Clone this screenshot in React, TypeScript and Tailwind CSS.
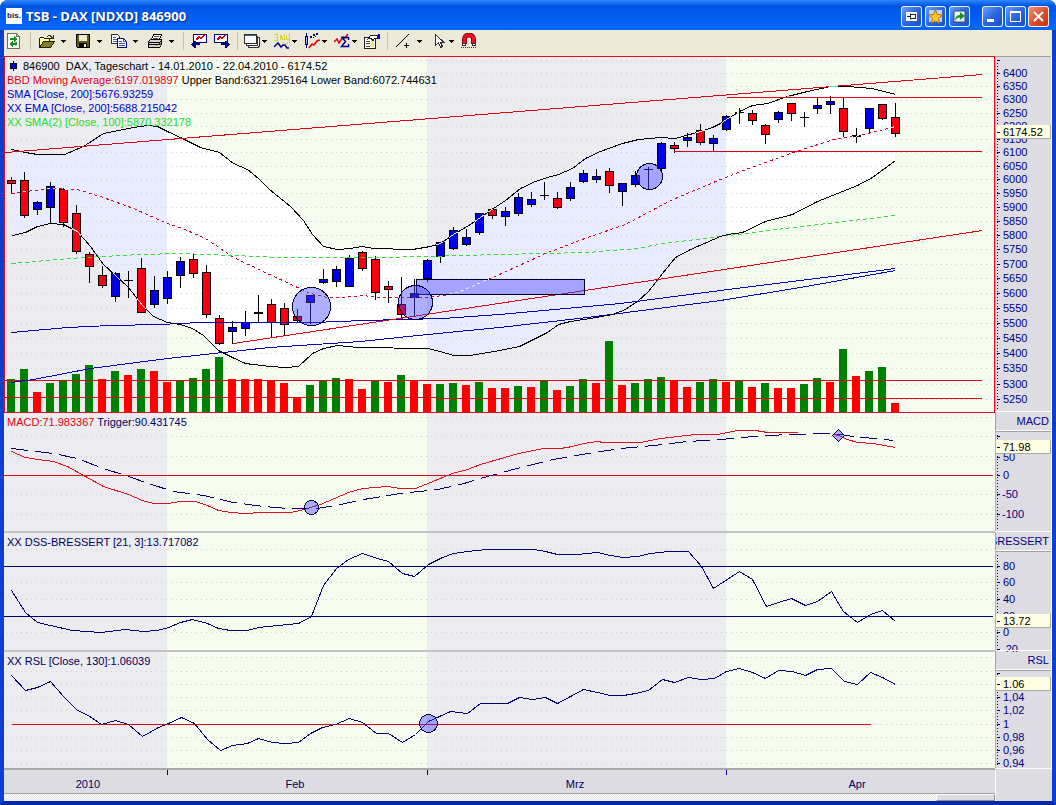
import type { ReactNode } from "react";

type Candle = [number, number, number, number, "r" | "b" | "d"];

// high, body top, body bottom, low, kind (r = down, b = up, d = doji)
const candles: Candle[] = [
  [177, 180, 183, 193, "r"], [172, 180, 215, 217, "r"], [201, 202, 209, 214, "b"], [182, 186, 207, 222, "b"],
  [188, 189, 222, 226, "r"], [205, 213, 251, 253, "r"], [252, 254, 266, 282, "r"], [266, 275, 285, 287, "r"],
  [272, 273, 296, 301, "b"], [271, 280, 281, 297, "d"], [258, 268, 312, 312, "r"], [276, 290, 304, 307, "b"],
  [271, 277, 298, 303, "b"], [257, 261, 275, 287, "b"], [254, 259, 273, 277, "r"], [265, 272, 314, 317, "r"],
  [315, 318, 343, 344, "r"], [321, 327, 331, 343, "b"], [311, 322, 328, 335, "b"], [295, 312, 314, 322, "d"],
  [299, 304, 322, 337, "r"], [303, 308, 324, 335, "r"], [309, 316, 320, 322, "r"], [295, 295, 302, 323, "b"],
  [269, 279, 282, 283, "b"], [266, 269, 281, 286, "b"], [255, 258, 286, 286, "b"], [251, 252, 268, 270, "r"],
  [256, 259, 292, 299, "r"], [281, 286, 289, 302, "r"], [277, 304, 314, 317, "r"], [279, 293, 297, 315, "b"],
  [259, 260, 278, 281, "b"], [242, 242, 256, 262, "b"], [227, 230, 248, 249, "b"], [229, 237, 244, 245, "b"],
  [213, 213, 232, 234, "b"], [208, 209, 215, 218, "r"], [207, 211, 216, 225, "b"], [193, 197, 213, 215, "b"],
  [192, 199, 204, 206, "b"], [182, 195, 196, 199, "d"], [192, 198, 207, 208, "r"], [182, 187, 198, 200, "b"],
  [170, 173, 181, 182, "b"], [169, 176, 179, 182, "b"], [168, 171, 185, 192, "r"], [183, 183, 191, 205, "b"],
  [171, 175, 184, 186, "b"], [167, 169, 170, 189, "d"], [142, 143, 168, 170, "b"], [142, 145, 148, 152, "r"],
  [133, 137, 140, 146, "b"], [124, 130, 142, 144, "r"], [135, 138, 143, 151, "b"], [115, 116, 129, 130, "b"],
  [108, 112, 113, 123, "d"], [110, 113, 120, 124, "r"], [124, 125, 134, 143, "r"], [111, 112, 119, 122, "b"],
  [103, 103, 113, 120, "r"], [112, 117, 118, 126, "d"], [98, 105, 108, 113, "b"], [96, 101, 104, 113, "b"],
  [98, 108, 131, 136, "r"], [128, 135, 137, 142, "d"], [108, 108, 128, 132, "b"], [104, 104, 118, 119, "r"],
  [103, 117, 133, 136, "r"],
];

const volumeTops = [
  379, 369, 392, 383, 381, 374, 365, 379, 371, 375, 369, 371, 382, 381, 378, 369, 357, 379, 379, 379, 380, 383, 397,
  385, 381, 378, 379, 389, 381, 382, 375, 380, 384, 384, 383, 385, 382, 388, 388, 386, 387, 381, 390, 386, 379, 383,
  341, 385, 383, 379, 377, 380, 387, 382, 379, 382, 381, 387, 383, 388, 388, 384, 378, 382, 349, 376, 371, 367, 403,
];
const volumeKinds = "ggrggggrgrgrrgggg" + "rrrrrrgggrrgrgrrggrgrrgrgrggrgrgggrrggrgrgrrggrgrggr";

const upperBand =
  "11,149 25,152 37,154 64,154 83,146 103,133 133,127 147,125 157,126 167,131 182,138 200,147 219,152 233,163 247,169 258,178 269,189 290,206 303,220 312,234 323,246 337,249 350,248 362,246 373,248 412,249 430,246 440,243 453,234 470,224 487,212 505,200 520,188 535,181 547,177 558,174 572,168 585,158 600,151 622,143 638,139 660,137 675,138 700,131 712,127 720,123 726,119 739,111 752,105 767,103 787,96 807,91 830,86 847,86 872,88 895,94";
const lowerBand =
  "12,235 25,232 37,226 50,223 63,224 77,231 90,246 103,264 115,275 128,287 142,305 153,316 167,322 180,324 192,328 203,335 218,350 232,357 245,363 269,366 285,367 298,366 312,353 323,348 337,345 357,347 427,348 440,351 453,355 470,355 499,350 519,346 537,337 547,332 558,324 570,321 590,318 612,314 623,310 637,301 648,291 662,273 675,257 690,249 720,236 727,234 742,232 765,221 792,214 817,201 857,185 872,177 895,160";
const movingAverage =
  "11,193 25,191 50,188 77,189 90,193 103,197 133,208 167,223 182,228 205,238 220,248 233,257 267,273 297,287 310,293 327,297 343,297 362,295 380,297 427,297 443,295 460,291 487,279 499,274 545,253 587,237 625,224 670,200 720,179 740,171 793,152 833,139 860,135 895,126";
const sma100 =
  "11,263 83,257 140,254 180,253 233,255 280,257 377,257 427,256 499,254 587,252 637,248 663,243 720,236 793,227 895,215";
const ema200 =
  "11,332 67,327 110,325 160,324 200,322 313,322 363,320 443,318 499,314 620,303 720,290 800,280 895,268";
const sma200 = "11,382 33,379 90,368 167,358 269,347 360,341 427,334 499,327 587,317 720,300 800,287 895,270";

const macdLeft =
  "11,451 25,457 37,459 53,461 67,466 85,476 103,486 128,494 142,500 153,503 167,503 180,501 195,501 207,505 218,510 230,512 245,513 260,512 290,512 300,510 310,507 320,504 348,492 362,488 387,486 400,488 415,488 430,482 452,473 467,469 480,464 518,453 543,448 560,448 572,446 583,443 597,441 603,442 640,442 660,438 695,434 717,434 737,430 755,430 767,432 797,432";
const macdRight = "834,434 838,435 847,439 857,442 873,443 895,447";
const trigger =
  "11,448 28,450 53,453 77,458 100,467 128,476 148,483 173,491 203,495 233,502 263,506 287,508 317,508 340,504 363,499 400,493 437,489 460,484 487,476 520,467 553,459 587,453 620,448 653,445 687,441 720,439 753,436 787,434 833,433 853,436 893,440";
const dss =
  "11,590 25,612 37,622 50,625 72,630 100,632 125,629 143,631 157,630 168,627 180,622 192,619 207,623 218,628 230,630 247,630 258,627 298,623 311,616 323,585 336,568 348,559 362,553 377,558 388,561 402,573 414,576 428,564 442,557 453,553 467,551 487,549 533,549 545,551 557,554 577,554 597,552 610,555 623,557 637,556 650,553 668,551 688,551 701,566 713,588 739,571 752,579 766,606 778,602 791,598 805,605 817,601 831,591 843,611 857,622 870,614 882,610 895,621";
const rsl =
  "11,675 25,690 37,687 50,681 63,696 77,710 88,715 101,724 115,720 128,724 142,736 158,727 168,723 181,717 194,723 207,739 220,750 232,745 247,743 258,738 272,742 285,743 298,742 310,733 322,727 335,724 349,718 362,722 376,733 388,733 402,742 415,734 428,721 450,711 467,713 480,703 507,703 519,697 532,699 545,697 557,703 570,696 583,689 597,692 610,695 623,695 635,693 648,690 662,679 674,682 688,677 701,679 714,678 726,671 739,668 752,672 765,678 778,670 792,671 805,675 817,669 831,668 844,681 857,684 870,672 882,677 895,684";

const priceScale: [number, string][] = [
  [60, ""], [73, "6400"], [86, "6350"], [99, "6300"], [113, "6250"], [126, "6200"], [139, "6150"], [152, "6100"],
  [166, "6050"], [179, "6000"], [193, "5950"], [207, "5900"], [221, "5850"], [235, "5800"], [249, "5750"],
  [264, "5700"], [278, "5650"], [293, "5600"], [308, "5550"], [323, "5500"], [338, "5450"], [353, "5400"],
  [368, "5350"], [384, "5300"], [399, "5250"],
];
const macdScale: [number, string][] = [[436, ""], [457, "50"], [475, "0"], [494, "-50"], [514, "-100"]];
const dssScale: [number, string][] = [[566, "80"], [582, "60"], [599, "40"], [616, "20"], [632, "0"], [649, "-20"]];
const rslScale: [number, string][] = [
  [673, ""], [684, ""], [697, "1,04"], [710, "1,02"], [724, "1"], [737, "0,98"], [750, "0,96"], [763, "0,94"],
];

const closePath = (top: string, bottom: string) => top + " " + bottom.split(" ").reverse().join(" ");
const candleX = (i: number) => 11 + i * 13;

const Line = ({ points, color, dash, clip }: { points: string; color: string; dash?: string; clip?: string }) => (
  <polyline points={points} fill="none" stroke={color} strokeDasharray={dash} clipPath={clip} />
);

const HLine = ({ y, from = 4, to = 993, color }: { y: number; from?: number; to?: number; color: string }) => (
  <rect x={from} y={y} width={to - from} height="1" fill={color} />
);

const Backdrop = ({ y, height, rows }: { y: number; height: number; rows: number[] }) => (
  <>
    <rect x="4" y={y} width="991" height={height} fill="#f7fcf0" />
    <rect x="4" y={y} width="163" height={height} fill="#ebebf0" />
    <rect x="427" y={y} width="299" height={height} fill="#ebebf0" />
    <GridRows rows={rows} />
  </>
);

const GridRows = ({ rows }: { rows: number[] }) => (
  <g stroke="#cfcfcf" strokeDasharray="1 4">
    {rows.map((row) => (
      <path key={row} d={`M6 ${row}.5H993`} />
    ))}
  </g>
);

const Plot = ({ y, height, x = 4, width = 991, className, children }: {
  y: number; height: number; x?: number; width?: number; className: string; children: ReactNode;
}) => (
  <svg
    className={"block w-full " + className}
    viewBox={`${x} ${y} ${width} ${height}`}
    preserveAspectRatio="none"
    shapeRendering="crispEdges"
  >
    {children}
  </svg>
);

const PricePlot = () => (
  <Plot x={5} y={57} width={989} height={355} className="h-[355px]">
    <defs>
      <clipPath id="grey-months">
        <rect x="5" y="57" width="162" height="355" />
        <rect x="427" y="57" width="299" height="355" />
      </clipPath>
      <clipPath id="bodies">
        {candles.map(([, top, bottom], i) => (
          <rect key={i} x={candleX(i) - 4} y={top} width="9" height={bottom - top} />
        ))}
        <rect x="416" y="279" width="169" height="15" />
      </clipPath>
    </defs>
    <Backdrop y={57} height={355} rows={[]} />
    <polygon points={closePath(upperBand, lowerBand)} fill="#ffffff" />
    <polygon points={closePath(upperBand, lowerBand)} fill="#e9ecff" clipPath="url(#grey-months)" />
    <GridRows rows={priceScale.map(([row]) => row)} />
    {volumeTops.map((top, i) => (
      <rect key={i} x={candleX(i) - 4} y={top} width="8" height={412 - top} fill={volumeKinds[i] === "g" ? "#008000" : "#ff0000"} />
    ))}
    <HLine y={380} to={982} color="#e00010" />
    <HLine y={397} to={437} color="#e00010" />
    <HLine y={398} from={437} to={982} color="#e00010" />
    {candles.map(([high, top, bottom, low, kind], i) => {
      const x = candleX(i);
      return (
        <g key={i}>
          <rect x={x} y={high} width="1" height={low - high + 1} fill="#000000" />
          <rect x={x - 4} y={top} width="9" height={bottom - top + (kind === "d" ? 0 : 1)} fill="#000000" />
          {kind !== "d" && (
            <rect x={x - 3} y={top + 1} width="7" height={bottom - top - 1} fill={kind === "r" ? "#f80010" : "#0000e8"} />
          )}
        </g>
      );
    })}
    <g transform="translate(.5 .5)">
      <Line points={ema200} color="#0000b8" />
      <Line points={sma200} color="#0000b8" />
      <Line points={sma100} color="#30e030" dash="4 3" />
      <Line points={movingAverage} color="#d80020" dash="3 3" />
      <Line points={upperBand} color="#000000" />
      <Line points={lowerBand} color="#000000" />
      <Line points="5,152 982,74" color="#e00010" />
      <Line points="233,343 982,230" color="#e00010" />
      <g fill="#4040ff" fillOpacity="0.42" stroke="#000030">
        <rect x="416" y="279" width="168" height="15" />
        <circle cx="311" cy="306" r="19" />
        <circle cx="415" cy="302" r="17" />
        <circle cx="649" cy="176" r="13" />
      </g>
    </g>
    <g clipPath="url(#bodies)">
      <g transform="translate(.5 .5)">
        <Line points={upperBand} color="#e8f0d8" />
        <Line points={lowerBand} color="#e8d8d0" />
        <Line points={movingAverage} color="#ffe8e8" dash="3 3" />
      </g>
    </g>
    <HLine y={97} from={727} to={982} color="#e00010" />
    <HLine y={151} from={674} to={982} color="#e00010" />
    <path d="M787 96.5H791M829 86.5H838" stroke="#40e0d0" />
  </Plot>
);

const Scale = ({ y, height, ticks, value, at, className }: {
  y: number; height: number; ticks: [number, string][]; value: string; at: number; className: string;
}) => (
  <svg className={"block w-full " + className} viewBox={`995 ${y} 57 ${height}`} fontSize="11">
    <g shapeRendering="crispEdges">
      <rect x="995" y={y} width="57" height={height} fill="#dddce3" />
      <path d={`M997.5 ${y + 4}V${y + height - 4}`} stroke="#000080" strokeDasharray="1 2" />
      {ticks.map(([row]) => (
        <rect key={row} x="997" y={row} width="3" height="1" fill="#000080" />
      ))}
    </g>
    <g fill="#000080">
      {ticks.map(([row, label]) => (
        <text key={row} x={label.startsWith("-") ? 1002 : 1003} y={row + 4}>
          {label}
        </text>
      ))}
    </g>
    <g shapeRendering="crispEdges">
      <rect x="996" y={at - 7} width="55" height="14" fill="#a8a8a0" />
      <rect x="996" y={at - 7} width="54" height="13" fill="#ffffe1" />
      <rect x="997" y={at} width="3" height="1" fill="#000080" />
      <path d={`M995 ${y + 0.5}H1051`} stroke="#a0a0a0" />
      <path d={`M995.5 ${y}V${y + height}`} stroke="#b0b0b4" />
      <path d={`M1051.5 ${y}V${y + height}M995 ${y + height - 1.5}H1052`} stroke="#ffffff" />
    </g>
    <text x="1003" y={at + 4} fill="#000000">
      {value}
    </text>
  </svg>
);

const ScaleTitle = ({ children }: { children: ReactNode }) => (
  <div className="flex h-[18px] items-center justify-end overflow-hidden border-r border-b border-l border-r-white border-b-white border-l-[#a0a0a0] bg-[#dddce3] pr-0.5 whitespace-nowrap text-[#000080]">
    {children}
  </div>
);

const Caption = ({ children }: { children: ReactNode }) => (
  <div className="absolute top-0.5 left-[3px] leading-[14px] whitespace-pre text-[#000060]">{children}</div>
);

const Caret = () => (
  <svg className="h-[3px] w-[5px]" viewBox="0 0 5 3" shapeRendering="crispEdges">
    <path d="M0 0h5v1H0zM1 1h3v1H1zM2 2h1v1H2z" />
  </svg>
);

const Divider = ({ className }: { className: string }) => (
  <div className={"h-[18px] border-l border-[#c5c2b4] " + className} />
);

const Tool = ({ label, className, menu, children }: {
  label: string; className: string; menu?: boolean; children: ReactNode;
}) => (
  <button type="button" aria-label={label} className={"flex h-5 shrink-0 items-center " + className}>
    <svg className="h-4 w-4 shrink-0" viewBox="0 0 16 16" fill="none" shapeRendering="crispEdges">
      {children}
    </svg>
    {menu && <Caret />}
  </button>
);

const TitleButton = ({ label, danger, children }: { label: string; danger?: boolean; children: ReactNode }) => (
  <button
    type="button"
    aria-label={label}
    className={
      "flex h-[21px] w-[21px] items-center justify-center rounded-[3px] border border-white/90 bg-linear-to-br " +
      (danger ? "from-[#f09070] via-[#e05030] to-[#c03010]" : "from-[#6a9cf8] via-[#2a66e0] to-[#1a50c8]")
    }
  >
    <svg className="h-[15px] w-[15px]" viewBox="0 0 15 15" fill="none">
      {children}
    </svg>
  </button>
);

const Toolbar = () => (
  <div className="flex h-[26px] items-center bg-[#ece9d8] pb-1 pl-0.5">
    <Tool label="Aktualisieren" className="w-6">
      <path d="M1.500 .5h9l3 3v12h-12z" fill="#fff" stroke="#707060" />
      <path d="M10.500 .5v3h3" stroke="#707060" />
      <path d="M4 7V5h4V3l4 3-4 3V7zM11 9v3H7v2l-4-3 4-3v2h2V9z" fill="#189018" />
    </Tool>
    <Divider className="w-[9px]" />
    <Tool label="Öffnen" className="w-9 gap-1.5" menu>
      <path d="M8 3h1V2h3v1h1v1h1V2h1v4h-4V5h1V4h-1V3H9v1H8z" fill="#303018" />
      <path d="M.5 14.500v-9l1-1h3l1 1h5v3" fill="#ffffa0" stroke="#202000" />
      <path d="M.5 14.500l4-6h11l-4 6z" fill="#808020" stroke="#202000" />
    </Tool>
    <Tool label="Speichern" className="w-9 gap-1.5" menu>
      <path d="M1.500 1.500h13v13h-12l-1-1z" fill="#606010" stroke="#000" />
      <path d="M4 2h8v6H4z" fill="#ece9d8" />
      <path d="M4 10h8v5H4z" fill="#000" />
      <path d="M9 11h2v3H9z" fill="#ece9d8" />
    </Tool>
    <Tool label="Kopieren" className="w-9 gap-1.5" menu>
      <path d="M.5 1.500h6l2 2v7h-8z" fill="#fff" stroke="#303040" />
      <path d="M2 4.500h3M2 6.500h5M2 8.500h5" stroke="#4060a0" />
      <path d="M6.500 5.500h6l3 3v6h-9z" fill="#fff" stroke="#000080" />
      <path d="M12.500 5.500v3h3M8 8.500h3M8 10.500h6M8 12.500h6" stroke="#4060a0" />
    </Tool>
    <Tool label="Drucken" className="w-9 gap-1.5" menu>
      <path d="M4.500 6.500l2-5h8l-2 5" fill="#fff" stroke="#000" />
      <path d="M7 3.500h5M6 5.500h5" stroke="#505050" />
      <path d="M1.500 8.500l2-2h11v5l-2 3h-11z" fill="#d0d0c8" stroke="#000" />
      <path d="M1.500 9.500h11v2h-11zM12.500 9.500l2-2" stroke="#000" />
      <path d="M8 12.500h3" stroke="#d0c000" />
      <path d="M13 10h1v3h-1z" fill="#606060" />
    </Tool>
    <Divider className="w-2" />
    <Tool label="Chart zurück" className="w-[23px]">
      <path d="M2.500 1.500h13v8h-13z" fill="#fff" stroke="#000080" />
      <path d="M5 7l3-3 2 1 4-3" stroke="#e00000" strokeWidth="1.500" />
      <path d="M0 11h1v-1h1V9h1V8h2v2h4v2H5v3H3v-1H2v-1H1v-1H0z" fill="#000080" />
    </Tool>
    <Tool label="Chart vor" className="w-[23px]">
      <path d="M.5 1.500h13v8H.5z" fill="#fff" stroke="#000080" />
      <path d="M3 7l3-3 2 1 4-3" stroke="#e00000" strokeWidth="1.500" />
      <path d="M16 11h-1v-1h-1V9h-1V8h-2v2H7v2h4v3h2v-1h1v-1h1v-1h1z" fill="#000080" />
    </Tool>
    <Divider className="w-[7px]" />
    <Tool label="Fenster" className="w-[30px] gap-0.5" menu>
      <path d="M4.500 4.500h11v9l-2 1h-9z" fill="#fff" stroke="#303030" />
      <path d="M2.500 3.500h11v9h-11z" fill="#fff" stroke="#303030" />
      <path d="M.5 1.500h12v9H.5z" fill="#fff" stroke="#303030" />
      <path d="M1 2.500h11" stroke="#3060b0" />
    </Tool>
    <Tool label="Indikatoren" className="w-[30px] gap-0.5" menu>
      <path d="M0 1.500h3.500v3H1.500M3.500 4.500v3H0M6.500 7V1.500M6.500 2.500h1v2h1v2h2V1M12.500 2v5M12.500 6.500h3M15.500 0v10M8 9.500h2M11 10.500h2v-2" stroke="#d8d040" />
      <path d="M0 14l4-4 3 4 2-2h2l2 3h2" stroke="#000080" strokeWidth="1.500" shapeRendering="auto" />
    </Tool>
    <Tool label="Chartart" className="w-[30px] gap-0.5" menu>
      <path d="M2.500 0v15" stroke="#000080" />
      <path d="M1.500 3.500h2v8h-2z" fill="#a0b0ff" stroke="#000080" />
      <path d="M5 15l3-4 2 1 3-4 3-1" stroke="#e00010" strokeWidth="1.500" shapeRendering="auto" />
      <path d="M6 3h2v2H6zM9 1h2v2H9zM12 0h2v2h-2zM9 4h1v1H9zM11 3h1v1h-1z" fill="#000080" />
    </Tool>
    <Tool label="Summe" className="w-[30px] gap-0.5" menu>
      <path d="M0 9l3-3 2 4 4-6 2 1 3-4" stroke="#e00010" strokeWidth="1.500" shapeRendering="auto" />
      <path d="M14.500 7V4.500H8L11.500 8.500 7.500 13.500h7V11" stroke="#000090" strokeWidth="1.500" shapeRendering="auto" />
    </Tool>
    <Tool label="Eigenschaften" className="w-[23px]">
      <path d="M.5 4.500h11v11H.5z" fill="#fff" stroke="#202020" />
      <path d="M2 8.500h4M2 10.500h4M2 13.500h4" stroke="#404040" />
      <path d="M7 8h3v6H7z" fill="#f0e860" />
      <path d="M4 6l3-4h6l1 3-4 1-1 2-2-3z" fill="#fff" stroke="#202020" />
      <path d="M14 1h2v5h-2z" fill="#0000b0" />
    </Tool>
    <Divider className="w-2" />
    <Tool label="Linie" className="w-[38px] gap-1.5" menu>
      <path d="M1 14L14 1" stroke="#000" />
      <path d="M9 12.500h5M11.500 10v5" stroke="#000" />
    </Tool>
    <Tool label="Zeiger" className="w-7" menu>
      <path d="M2.500 1.500v11l3-3 2 5 2-1-2-4h3.500z" fill="#fff" stroke="#303030" />
    </Tool>
    <Tool label="Magnet" className="w-6">
      <path d="M3.500 11V6a4 3.500 0 0 1 9 0v5" stroke="#900010" strokeWidth="5" shapeRendering="auto" />
      <path d="M3.500 11V6a4 3.500 0 0 1 9 0v5" stroke="#f01020" strokeWidth="3" shapeRendering="auto" />
      <path d="M1.500 10.500h3v2h-3zM11.500 10.500h3v2h-3z" fill="#fff" stroke="#303030" />
      <path d="M0 14.500h16" stroke="#303030" strokeDasharray="1 1" />
    </Tool>
  </div>
);

const TitleBar = () => (
  <header className="flex h-[30px] items-center bg-linear-to-b from-[#2f86fa] from-0% via-[#0054e3] via-20% to-[#0466fc] to-90% pt-0.5 pr-[7px] pl-1.5">
    <span className="flex h-4 w-4 items-center justify-center bg-white text-[8px] font-bold text-[#102050]">bis.</span>
    <h1 className="ml-1 flex-1 font-['Open_Sans',sans-serif] text-[13px] leading-5 font-bold text-white [text-shadow:1px_1px_1px_#0a2a80]">
      TSB - DAX [NDXD] 846900
    </h1>
    <div className="mr-3 flex gap-[3px]">
      <TitleButton label="Anheften">
        <path d="M2 3h11v9H2z" fill="#fff" />
        <path d="M3 7.500h3M6.500 4.500v6M7 5.500h5M7 9.500h5M11.500 5v5" stroke="#102040" />
      </TitleButton>
      <TitleButton label="Favorit">
        <path d="M1 1h13v12H1z" fill="#c0d4f0" />
        <path d="M7.500 1l2 4.500 5 .5-4 3.500 1.200 5-4.200-2.700-4.200 2.700 1.200-5L.5 6l5-.5z" fill="#ffc820" stroke="#b06810" />
      </TitleButton>
      <TitleButton label="Senden">
        <path d="M2 2h11v11H2z" fill="#e8f4f0" stroke="#305070" />
        <path d="M3 12c0-4 2-6 5-6V3l5 4-5 4V8.500c-2 0-4 1-5 3.500z" fill="#209030" />
      </TitleButton>
    </div>
    <div className="flex gap-0.5">
      <TitleButton label="Minimieren">
        <path d="M2 10h7v3H2z" fill="#fff" />
      </TitleButton>
      <TitleButton label="Maximieren">
        <path d="M2.500 2.500h10v10h-10z" stroke="#fff" />
        <path d="M2 3h11" stroke="#fff" strokeWidth="2" />
      </TitleButton>
      <TitleButton label="Schließen" danger>
        <path d="M3 3l9 9M12 3l-9 9" stroke="#fff" strokeWidth="2" />
      </TitleButton>
    </div>
  </header>
);

const markerStyle = { fill: "#4040ff", fillOpacity: 0.42, stroke: "#000030" };

export default function App() {
  return (
    <div className="overflow-hidden rounded-t-lg bg-[#0a3fd0] font-['Liberation_Sans',Arial,sans-serif] text-[11px]">
      <TitleBar />
      <div className="border-x-4 border-b-4 border-x-[#0a3fd0] border-b-[#0028a8]">
        <Toolbar />

        <main className="grid grid-cols-[1fr_57px]">
          <section className="relative border border-[#e01020]">
            <PricePlot />
            <div className="absolute top-0.5 left-0.5 leading-[14px] whitespace-pre text-black">
              <p className="flex">
                <svg className="mr-1 h-[14px] w-3" viewBox="0 0 12 14" shapeRendering="crispEdges">
                  <path d="M6 2h1v10H6z" />
                  <path d="M3 4h7v6H3z" />
                  <path d="M4 5h5v4H4z" fill="#0000e0" />
                </svg>
                846900  DAX, Tageschart - 14.01.2010 - 22.04.2010 - 6174.52
              </p>
              <p>
                <span className="text-[#e00010]">BBD Moving Average:6197.019897</span> Upper Band:6321.295164 Lower
                Band:6072.744631
              </p>
              <p className="text-[#0000c0]">SMA [Close, 200]:5676.93259</p>
              <p className="text-[#0000c0]">XX EMA [Close, 200]:5688.215042</p>
              <p className="text-[#20e020]">XX SMA(2) [Close, 100]:5870.332178</p>
            </div>
          </section>
          <Scale y={56} height={357} ticks={priceScale} value="6174.52" at={132} className="h-[357px]" />

          <section className="relative border-b-2 border-[#c4c4c4]">
            <Plot y={413} height={118} className="h-[118px]">
              <Backdrop y={413} height={118} rows={[417, 436, 456, 494, 514]} />
              <HLine y={475} color="#e00010" />
              <g transform="translate(.5 .5)">
                <Line points={macdLeft} color="#e01020" />
                <Line points={macdRight} color="#e01020" />
                <Line points={trigger} color="#000070" dash="17 7" />
                <circle cx="311" cy="507" r="7" {...markerStyle} />
                <path d="M838 429l6 6-6 6-6-6z" {...markerStyle} />
              </g>
            </Plot>
            <Caption>
              <span className="text-[#e00010]">MACD:71.983367</span> Trigger:90.431745
            </Caption>
          </section>
          <div>
            <ScaleTitle>MACD</ScaleTitle>
            <Scale y={431} height={102} ticks={macdScale} value="71.98" at={447} className="h-[102px]" />
          </div>

          <section className="relative border-b-2 border-[#c4c4c4]">
            <Plot y={533} height={117} className="h-[117px]">
              <Backdrop y={533} height={117} rows={[549, 582, 599, 632]} />
              <HLine y={566} color="#000070" />
              <HLine y={616} color="#000070" />
              <g transform="translate(.5 .5)">
                <Line points={dss} color="#000070" />
              </g>
            </Plot>
            <Caption>XX DSS-BRESSERT [21, 3]:13.717082</Caption>
          </section>
          <div>
            <ScaleTitle>DSS-BRESSERT</ScaleTitle>
            <Scale y={551} height={101} ticks={dssScale} value="13.72" at={621} className="h-[101px]" />
          </div>

          <section className="relative border-b-2 border-[#a8a8a8]">
            <Plot y={652} height={116} className="h-[116px]">
              <Backdrop y={652} height={116} rows={[657, 671, 684, 697, 710, 724, 737, 750, 763]} />
              <HLine y={724} from={12} to={871} color="#e00010" />
              <g transform="translate(.5 .5)">
                <Line points={rsl} color="#000070" />
                <circle cx="428" cy="723" r="9" {...markerStyle} />
              </g>
            </Plot>
            <Caption>XX RSL [Close, 130]:1.06039</Caption>
          </section>
          <div>
            <ScaleTitle>RSL</ScaleTitle>
            <Scale y={670} height={100} ticks={rslScale} value="1.06" at={684} className="h-[100px]" />
          </div>

          <div>
            <svg className="block h-[23px] w-full" viewBox="4 770 991 23" fontSize="11" textAnchor="middle">
              <rect x="4" y="770" width="991" height="23" fill="#dddce3" />
              <path d="M167 770h1v5h-1zM427 770h1v5h-1zM726 770h1v5h-1z" fill="#000080" />
              <g fill="#000060">
                <text x="88" y="788">2010</text>
                <text x="295" y="788">Feb</text>
                <text x="575" y="788">Mrz</text>
                <text x="857" y="788">Apr</text>
              </g>
            </svg>
            <div className="flex h-2 justify-end border-t border-[#a0a0a0] bg-[#f0f0f0] bg-[repeating-conic-gradient(#ffffff_0_25%,#e2e0dc_0_50%)] bg-[length:2px_2px]">
              <div className="w-[6%] border border-t-white border-r-[#909090] border-b-[#909090] border-l-white bg-[#dddce3]" />
            </div>
          </div>
          <div className="border-l border-white bg-[#dddce3]" />
        </main>
      </div>
    </div>
  );
}
